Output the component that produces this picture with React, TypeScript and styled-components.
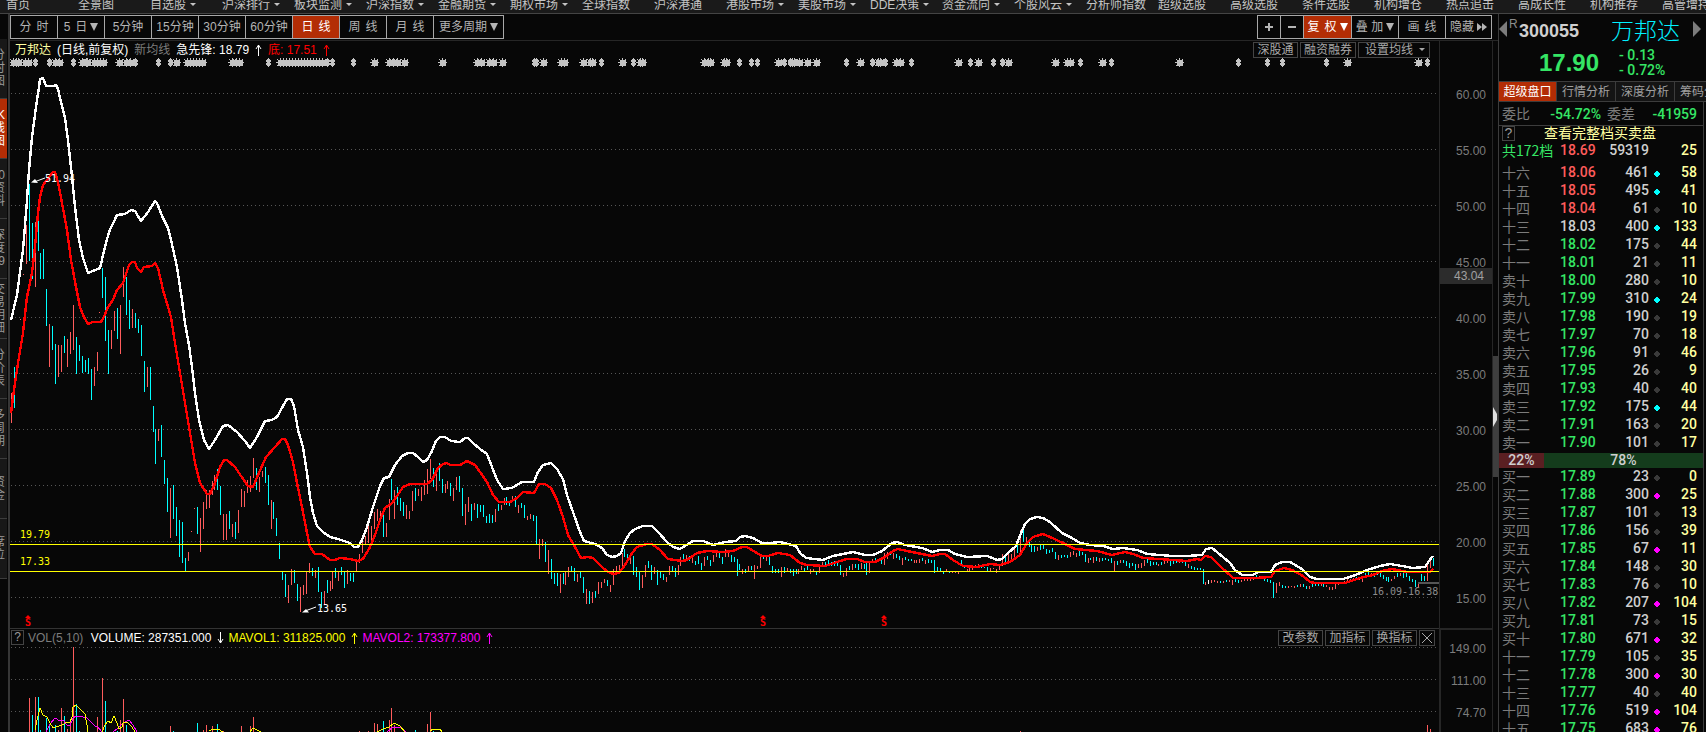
import React from "react";
import styled, { createGlobalStyle } from "styled-components";

const GlobalStyle = createGlobalStyle`
  * { box-sizing: border-box; }
  body {
    margin: 0;
    background: #070707;
    color: #b8b8b8;
    font: 12px/16px "Liberation Sans", "Noto Sans CJK SC", sans-serif;
  }
  button { font: inherit; color: inherit; background: none; border: 0; padding: 0; margin: 0; white-space: nowrap; }
  a { color: inherit; text-decoration: none; }
`;

const UP = "#ff5c5c";
const DOWN = "#00ffff";
const GREEN = "#35e565";
const ACCENT = "#b32d05";

/* ---------- frame ---------- */

const Page = styled.div`
  display: flex;
  flex-direction: column;
  height: 100vh;
  overflow: hidden;
`;

const Nav = styled.nav`
  display: flex;
  flex: none;
  height: 14px;
  padding-left: 6px;
  overflow: hidden;
  background: #1a1a1a;
  border-bottom: 1px solid #444;
`;

const NavLink = styled.a`
  display: flex;
  flex: 0 0 72px;
  align-items: center;
  gap: 4px;
  height: 9px;
  line-height: 8px;
  color: #c4c4c4;
  white-space: nowrap;
`;

const Body = styled.div`
  display: flex;
  flex: 1;
  min-height: 0;
`;

const Caret = styled.span<{ $size: number }>`
  display: inline-block;
  border: ${(p) => p.$size}px solid transparent;
  border-top: ${(p) => (p.$size > 3 ? p.$size * 2 : p.$size)}px solid currentColor;
  border-bottom: 0;
`;

/* ---------- left rail ---------- */

const Rail = styled.aside`
  flex: 0 0 10px;
  padding: 25px 1px 0 0;
  overflow: hidden;
  border-right: 2px solid #363636;
`;

const RailTab = styled.button<{ $active?: boolean }>`
  display: flex;
  flex-direction: column;
  align-items: flex-end;
  justify-content: center;
  width: 100%;
  height: 60px;
  padding-right: 2px;
  overflow: hidden;
  line-height: 13px;
  color: ${(p) => (p.$active ? "#fff" : "#9a9a9a")};
  background: ${(p) => (p.$active ? ACCENT : "#181818")};
  border-bottom: 1px solid #3c3c3c;
`;

/* ---------- centre ---------- */

const Main = styled.main`
  display: flex;
  flex: 1;
  flex-direction: column;
  min-width: 0;
`;

const Toolbar = styled.div`
  display: flex;
  flex: none;
  justify-content: space-between;
  height: 27px;
  padding: 1px 6px 0 0;
  border-bottom: 1px solid #262626;
`;

const ButtonGroup = styled.div`
  display: flex;
  height: 24px;
  border: 1px solid #a8a8a8;
`;

const ToolButton = styled.button<{ $width: number; $active?: boolean }>`
  display: flex;
  align-items: center;
  justify-content: center;
  gap: 3px;
  width: ${(p) => p.$width}px;
  color: ${(p) => (p.$active ? "#fff" : "#b4b4b4")};
  background: ${(p) => (p.$active ? ACCENT : "none")};
  & + & { border-left: 1px solid #a8a8a8; }
`;

const Spaced = styled.span`
  display: flex;
  gap: 5px;
`;

const Charts = styled.div`
  display: flex;
  flex: 1;
  min-height: 0;
`;

const Panes = styled.div`
  display: flex;
  flex: 1;
  flex-direction: column;
  min-width: 0;
`;

const Pane = styled.section<{ $height?: number }>`
  display: flex;
  flex: ${(p) => (p.$height ? `0 0 ${p.$height}px` : "1")};
  flex-direction: column;
  min-height: 0;
  & + & { border-top: 1px solid #333; }
`;

const PaneHeader = styled.header`
  display: flex;
  flex: none;
  align-items: center;
  justify-content: space-between;
  height: 17px;
  padding-right: 4px;
`;

const Legend = styled.div<{ $indent: number; $gap: number }>`
  display: flex;
  align-items: center;
  gap: ${(p) => p.$gap}px;
  padding-left: ${(p) => p.$indent}px;
  white-space: pre;
`;

const Tint = styled.span<{ $color: string }>`
  display: flex;
  align-items: center;
  gap: 6px;
  color: ${(p) => p.$color};
`;

const Tags = styled.div<{ $right: number }>`
  display: flex;
  gap: 2px;
  padding-right: ${(p) => p.$right}px;
`;

const Tag = styled.button`
  display: flex;
  align-items: center;
  justify-content: center;
  gap: 6px;
  min-width: 45px;
  height: 16px;
  padding: 0 3px;
  color: #a8a8a8;
  border: 1px solid #444;
`;

const WideTag = styled(Tag)`
  padding: 0 4px 0 6px;
`;

const CloseTag = styled(Tag)`
  min-width: 16px;
  padding: 0;
`;

const HelpButton = styled.button`
  width: 13px;
  height: 15px;
  line-height: 13px;
  color: #9a9a9a;
  border: 1px solid #444;
`;

const Plot = styled.svg`
  display: block;
  flex: 1;
  width: 100%;
  min-height: 0;
`;

const Axis = styled.div`
  display: flex;
  flex: 0 0 54px;
  flex-direction: column;
  color: #7c7c7c;
  text-align: right;
`;

const AxisScale = styled.div<{ $height?: number; $top: number; $step: number }>`
  position: relative;
  flex: ${(p) => (p.$height ? `0 0 ${p.$height}px` : "1")};
  min-height: 0;
  padding: ${(p) => p.$top}px 6px 0 0;
  overflow: hidden;
  line-height: ${(p) => p.$step}px;
  border: solid #262626;
  border-width: 0 1px;
  & + & { border-top: 2px solid #262626; border-left-width: 2px; }
`;

const CursorPrice = styled.output`
  position: absolute;
  top: 227px;
  right: 0;
  left: 0;
  padding-right: 8px;
  line-height: 16px;
  color: #a0a0a0;
  background: #2c2c2c;
`;

const Splitter = styled.div`
  flex: 0 0 5px;
  padding-top: 315px;
`;

const SplitterGrip = styled.div`
  display: flex;
  align-items: center;
  height: 121px;
  background: #3e3e3e;
`;

/* ---------- quote panel ---------- */

const Quote = styled.aside`
  flex: 0 0 208px;
  overflow: hidden;
  border-left: 1px solid #3c3c3c;
`;

const QuoteTitle = styled.div`
  display: flex;
  align-items: center;
  height: 33px;
  padding-right: 5px;
`;

const Market = styled.span`
  align-self: flex-start;
  width: 12px;
  padding: 2px 0 0 2px;
  color: #8c8c8c;
`;

const Code = styled.span`
  flex: 1;
  font-size: 18px;
  font-weight: bold;
  color: #cfcfcf;
`;

const StockName = styled.h1`
  margin: 0 13px 0 0;
  font-size: 23px;
  font-weight: 300;
  line-height: 32px;
  color: #00f0ff;
`;

const QuotePrice = styled.div`
  display: flex;
  align-items: center;
  gap: 20px;
  height: 34px;
  padding: 0 0 2px 40px;
  color: ${GREEN};
`;

const Last = styled.strong`
  font-size: 24px;
  line-height: 28px;
`;

const Change = styled.span`
  display: block;
  font: 500 14px/15px Roboto, sans-serif;
`;

const QuoteTabs = styled.div`
  display: flex;
  height: 21px;
  overflow: hidden;
  border: solid #3c3c3c;
  border-width: 1px 0;
`;

const QuoteTab = styled.button<{ $active?: boolean }>`
  flex: 0 0 ${(p) => (p.$active ? 58 : 59)}px;
  color: ${(p) => (p.$active ? "#fff" : "#a0a0a0")};
  background: ${(p) => (p.$active ? ACCENT : "#141414")};
  border-right: 1px solid #3c3c3c;
`;

const Book = styled.div`
  margin-right: 2px;
  font-size: 14px;
  border-right: 1px solid #3c3c3c;
`;

const Imbalance = styled.dl`
  display: grid;
  grid-template-columns: 28px 71px 34px 1fr;
  height: 24px;
  margin: 0;
  padding: 0 6px 0 3px;
  line-height: 24px;
  text-align: right;
  border-bottom: 1px solid #3c3c3c;
  dt { color: #7c7c7c; }
  dd { margin: 0; font: 500 14px/24px Roboto, sans-serif; color: ${GREEN}; }
`;

const FullBook = styled.div`
  display: flex;
  align-items: center;
  height: 15px;
  padding-left: 3px;
`;

const FullBookLink = styled.a`
  margin-left: 29px;
  line-height: 15px;
  color: #ffffa0;
`;

const Levels = styled.table<{ $gap?: number }>`
  width: 100%;
  margin-bottom: ${(p) => p.$gap || 0}px;
  table-layout: fixed;
  border-collapse: collapse;
  font: 500 14px/18px Roboto, sans-serif;
  text-align: right;
  th, td { height: 18px; padding: 0; line-height: 18px; }
`;

const LevelName = styled.th<{ $color: string }>`
  width: 61px;
  padding-left: 3px !important;
  font: 14px/18px "Noto Sans CJK SC", sans-serif;
  text-align: left;
  color: ${(p) => p.$color};
`;

const Price = styled.td<{ $color: string }>`
  width: 35px;
  color: ${(p) => p.$color};
`;

const Volume = styled.td`
  width: 54px;
  color: #cfcfcf;
`;

const Mark = styled.td`
  width: 11px;
`;

const Orders = styled.td`
  padding-right: 6px !important;
  color: #ffffa0;
`;

const Ratio = styled.div`
  display: flex;
  height: 15px;
  margin: 2px 0 -1px;
  font: 500 14px/15px Roboto, sans-serif;
  color: #cfcfcf;
  text-align: center;
`;

const Share = styled.div<{ $value: number; $color: string }>`
  flex: ${(p) => p.$value};
  background: ${(p) => p.$color};
`;

/* ---------- data ---------- */

const NAV = [
  "首页", "全景图", "自选股▾", "沪深排行▾", "板块监测▾", "沪深指数▾", "金融期货▾", "期权市场▾",
  "全球指数", "沪深港通", "港股市场▾", "美股市场▾", "DDE决策▾", "资金流向▾", "个股风云▾", "分析师指数",
  "超级选股", "高级选股", "条件选股", "机构增仓", "热点追击", "高成长性", "机构推荐", "高管增持",
];

const RAIL = [
  ["分", "时", "图"], ["K", "线", "图"], ["F10", "资", "料"], ["深", "度", "F9"], ["交", "易", "明", "细"],
  ["分", "价", "表"], ["多", "周", "期"], ["资", "金"], ["席", "位"],
];

const PRICE_TICKS = ["60.00", "55.00", "50.00", "45.00", "40.00", "35.00", "30.00", "25.00", "20.00", "15.00"];
const VOLUME_TICKS = ["149.00", "111.00", "74.70"];

type Level = [string, string, number, string, number];
/* name, price, volume, flag (c = fresh sell, m = fresh buy, - = none), orders */
const SELLS: Level[] = [
  ["十六", "18.06", 461, "c", 58], ["十五", "18.05", 495, "c", 41], ["十四", "18.04", 61, "-", 10],
  ["十三", "18.03", 400, "c", 133], ["十二", "18.02", 175, "-", 44], ["十一", "18.01", 21, "-", 11],
  ["卖十", "18.00", 280, "-", 10], ["卖九", "17.99", 310, "c", 24], ["卖八", "17.98", 190, "-", 19],
  ["卖七", "17.97", 70, "-", 18], ["卖六", "17.96", 91, "-", 46], ["卖五", "17.95", 26, "-", 9],
  ["卖四", "17.93", 40, "-", 40], ["卖三", "17.92", 175, "c", 44], ["卖二", "17.91", 163, "-", 20],
  ["卖一", "17.90", 101, "-", 17],
];
const BUYS: Level[] = [
  ["买一", "17.89", 23, "-", 0], ["买二", "17.88", 300, "m", 25], ["买三", "17.87", 101, "-", 13],
  ["买四", "17.86", 156, "-", 39], ["买五", "17.85", 67, "m", 11], ["买六", "17.84", 148, "-", 30],
  ["买七", "17.83", 76, "-", 10], ["买八", "17.82", 207, "m", 104], ["买九", "17.81", 73, "-", 15],
  ["买十", "17.80", 671, "m", 32], ["十一", "17.79", 105, "-", 35], ["十二", "17.78", 300, "m", 30],
  ["十三", "17.77", 40, "-", 40], ["十四", "17.76", 519, "m", 104], ["十五", "17.75", 683, "m", 76],
];
const MARKS: Record<string, string> = { c: "#00ffff", m: "#ff00ff", "-": "#3a3a3a" };
const PREVIOUS_CLOSE = 18.03;
const priceColor = (p: string) => (+p > PREVIOUS_CLOSE ? UP : +p < PREVIOUS_CLOSE ? GREEN : "#cfcfcf");

const WIDE_EVENTS = [
  13, 16, 18, 25, 28, 55, 59, 82, 86, 87, 94, 97, 100, 103, 119, 126, 130, 176, 187, 190, 193, 196, 199, 202,
  232, 236, 239, 280, 283, 286, 289, 292, 295, 298, 301, 304, 307, 310, 313, 316, 319, 322, 374, 389, 393, 397,
  404, 442, 477, 481, 489, 493, 502, 543, 561, 564, 583, 590, 592, 622, 640, 642, 704, 708, 710, 724, 726, 778,
  792, 794, 799, 807, 816, 860, 878, 880, 896, 900, 958, 978, 1008, 1055, 1067, 1070, 1102, 1179, 1347, 1418,
];
const NARROW_EVENTS = [
  35, 49, 73, 135, 158, 170, 268, 327, 332, 353, 534, 536, 601, 633, 739, 751, 757, 784, 790, 846, 872, 885,
  911, 970, 993, 1002, 1080, 1111, 1238, 1267, 1282, 1326, 1427,
];

const UPPER =
  "11,320 17,295 20,272 23,250 26,213 27,200 29,170 32,137 36,107 39,87 40,79 43,78 46,86 53,86 56,85 58,89 61,102 65,118 68,140 71,167 74,197 76,215 79,240 83,258 88,273 93,271 100,268 105,247 109,232 117,215 125,214 131,210 135,211 141,221 148,212 155,201 157,203 163,218 168,228 171,240 177,267 182,300 185,323 189,345 192,367 195,393 199,420 204,440 209,449 215,440 223,426 228,425 237,432 245,441 250,448 257,437 265,421 272,420 277,417 283,406 287,399 291,399 294,406 298,430 303,447 307,473 310,497 313,513 317,526 323,532 330,537 338,539 350,543 354,547 358,547 362,540 367,527 373,507 380,486 384,478 389,477 395,465 402,456 408,453 413,453 418,457 423,462 427,460 432,451 436,441 440,437 445,437 451,441 460,442 465,438 468,438 473,443 480,449 487,454 492,467 497,480 503,489 512,488 522,482 534,482 538,472 543,465 551,463 557,469 563,479 567,495 573,512 580,532 584,541 595,544 602,548 607,555 612,557 617,556 621,553 625,541 630,533 635,529 643,526 652,526 658,532 667,542 673,547 680,549 688,544 693,541 703,541 713,545 725,542 736,541 740,537 745,536 753,538 762,543 770,543 780,542 796,546 800,553 806,558 823,560 833,556 853,552 865,555 873,555 882,551 892,543 897,542 905,545 922,548 932,552 940,550 948,550 955,554 967,557 987,556 997,560 1002,559 1008,553 1016,546 1021,533 1025,524 1030,519 1037,517 1043,518 1050,522 1062,533 1072,538 1080,543 1090,545 1103,546 1113,549 1123,548 1137,550 1147,554 1160,555 1173,556 1187,556 1202,555 1206,549 1212,548 1217,552 1230,563 1235,570 1242,575 1253,575 1258,572 1271,572 1275,565 1282,562 1290,562 1302,569 1310,577 1317,579 1343,579 1353,576 1367,570 1380,566 1390,564 1402,566 1413,568 1425,567 1429,561 1433,556";
const LOWER =
  "11,413 13,397 18,363 23,333 27,297 32,273 35,247 38,213 40,197 43,185 47,180 53,172 55,172 58,182 62,203 67,230 71,260 76,287 80,307 84,317 88,324 93,322 101,322 104,317 108,307 113,300 117,290 123,283 129,265 132,262 135,262 137,268 141,272 144,267 152,266 155,263 158,268 163,290 171,317 175,343 180,373 185,403 190,433 195,463 200,483 207,494 210,494 215,483 220,467 224,460 227,460 235,467 241,476 248,486 253,487 258,475 266,457 275,447 282,439 285,439 288,445 293,462 297,483 302,507 307,533 310,547 315,554 322,554 330,560 335,560 340,558 350,559 358,561 363,559 370,547 375,535 380,520 385,508 392,503 397,496 403,487 410,484 427,484 432,480 438,468 443,464 447,463 450,465 460,465 467,461 475,465 480,472 487,482 493,495 499,502 510,502 517,498 523,492 534,493 539,484 545,484 551,488 557,500 563,517 568,535 575,547 581,558 588,557 593,558 602,567 608,572 613,574 619,573 625,565 632,553 637,547 647,544 652,544 660,550 668,559 682,561 687,560 697,553 707,551 723,552 733,551 742,547 747,547 755,552 762,556 768,556 778,553 790,555 800,563 807,565 825,566 837,562 847,559 857,559 865,562 875,562 885,557 893,551 898,549 907,551 932,556 940,554 945,554 953,560 963,566 977,567 990,564 1000,565 1010,562 1020,555 1027,543 1033,537 1043,534 1050,537 1063,543 1075,549 1097,551 1112,555 1125,552 1133,554 1143,558 1173,560 1187,561 1197,559 1201,560 1205,556 1211,557 1220,566 1233,578 1255,578 1271,577 1275,571 1284,568 1292,570 1303,576 1310,582 1315,583 1345,583 1360,578 1373,575 1382,571 1392,569 1407,572 1430,572 1433,569";

/* Each bar is "<r|c><x>:<high>-<low>": r rises, c falls. */
const BARS_EARLY =
  "r11:393-423 c14:367-408 r17:360-361 r20:319-320 r23:274-275 r26:225-264 c29:184-261 c32:223-279 r35:222-287 c38:205-251 c40:253-279 c43:249-279 c46:289-326 r49:324-367 c52:326-350 c55:344-384 r58:345-377 r61:345-372 c64:336-353 r67:339-367 r70:332-354 r73:305-350 c76:337-374 c79:345-361 c82:356-373 c85:360-372 c88:358-374 c91:369-400 r94:367-386 r97:352-371 r99:312-313 c102:268-298 c105:277-341 c108:330-374 r111:330-349 r114:311-331 c117:308-339 r120:305-354 r123:267-297 c126:277-315 c129:300-329 r132:309-328 c135:313-328 c138:319-333 c141:325-356 c144:361-392 r147:367-387 c150:367-400 c153:406-432 c155:429-464 r158:429-441 c161:425-457 c164:460-484 c167:478-512 r170:488-538 c173:485-519 c176:507-536 c179:520-557 c182:522-563 c185:558-571 r188:552-561 r191:531-532 r194:508-509 c197:507-534 r200:518-552 r203:502-529 r206:490-509 r209:490-508 r212:481-495 r214:475-490 c217:469-490 c220:486-515 r223:514-540 r226:514-540 c229:511-529 r232:524-537 c235:522-539 r238:510-533 r241:489-507 r244:491-507 r247:480-493 r250:476-492 r253:458-478 c256:468-490 r259:477-492 r262:471-477 c265:467-483 c268:475-505 r271:500-529 c273:502-519 c276:518-536 c279:543-559 c282:572-580 c285:574-597 r288:585-603 r291:569-585 c294:570-583 c297:584-601 r300:587-612 r303:585-595 r306:571-594 r309:563-573 c312:568-576 r315:570-578 c318:567-592 c321:592-608 r324:591-605 c327:580-593 r330:581-591 r332:571-589 c335:568-578 r338:571-581 c341:567-575 c344:571-588 r347:570-584 c350:573-581 c353:573-582 r356:562-571 r359:554-563 r362:541-553 r365:536-544 r368:525-543 r371:526-544 r374:512-529 r377:509-521 r380:511-522 c383:515-537 r386:523-537 r389:499-520 c391:479-500 r394:490-519 c397:487-505 c400:498-511 c403:502-516 r406:505-519 r409:511-519 r412:491-511 c415:488-501 r418:489-496 r421:487-501 r424:480-495 r427:469-494 r430:459-479 c433:468-487 r436:474-491 c439:463-481 c442:479-493 r445:484-493 r447:481-489 c450:483-496 r453:488-501 r456:477-490 c459:476-492 c462:488-516 r465:504-525 r468:497-512 c471:504-521 r474:503-510 c477:504-518 c480:505-512 c483:505-517 c486:516-523 c489:514-523 c492:515-523 r495:509-522 c498:504-511 r501:505-510 r504:498-505 c506:497-505 c509:502-506 r512:496-501 c515:496-507 r518:505-513 c521:503-508 c524:505-518 r527:516-520 r530:514-519 c533:515-521 c536:516-544 r539:539-559 r542:539-546 c545:542-562 r548:550-574 c551:559-579 c554:573-584 c557:573-586 r560:574-593 c563:573-584 r565:572-585 r568:567-577 c571:566-571 c574:568-581 r577:574-582 c580:572-578 c583:577-593 r586:589-604 c589:591-604 r592:592-603 c595:591-598 r598:582-594 r601:582-588 r604:579-583 c607:580-586 r610:585-592 r613:569-585 r616:566-574 r619:565-573 r622:553-567 c624:549-557 c627:554-563 r630:554-564 c633:556-575 c636:567-577 c639:572-590 r642:575-588 r645:565-577 c648:561-568 c651:565-580 r654:567-574 c657:570-585 c660:572-578 c663:574-580 r666:577-582 r669:566-575 c672:566-571 c675:568-577 r678:565-575 r680:557-566 c683:554-559";
/* Later sessions are stored on a grid three times as fine, from an origin of their own. */
const BARS_MIDDLE =
  "r259:345-363 c268:348-363 r277:348-369 c286:363-375 c295:348-372 c304:369-390 r313:351-378 c322:348-360 c331:360-378 r340:345-366 r349:330-351 c358:339-354 c367:351-372 r376:327-351 r385:339-351 c394:345-366 c403:351-366 c412:357-408 c418:372-390 r427:387-402 c436:387-399 r445:378-393 c454:378-390 r463:375-417 r472:378-387 r481:351-384 c490:345-357 r499:348-363 c508:351-375 c517:378-399 c526:387-399 c535:387-399 r544:381-411 c553:381-399 r562:384-396 c571:387-399 c580:387-408 c589:387-402 r595:387-402 r604:378-390 c613:384-396 c622:378-390 r631:387-402 r640:387-396 c649:393-405 r658:378-399 r667:366-378 c676:366-378 c685:360-372 c694:366-378 c703:363-378 c712:366-378 c721:375-405 r730:399-411 r739:384-408 c748:378-390 r757:372-390 c766:372-384 c775:372-390 r784:369-387 c793:372-387 c799:369-405 r808:366-399 r817:357-369 c826:354-363 c844:360-372 r853:339-375 r862:336-357 c871:336-345 r880:339-357 c889:342-354 c898:348-360 r907:354-375 c916:351-360 c925:357-363 c934:357-363 r943:360-369 r949:360-369 r958:357-369 c967:354-363 r976:360-372 c985:357-369 c994:360-369 c1003:360-399 c1012:381-393 c1021:384-396 c1030:396-402 r1039:387-396 c1048:393-399 r1057:396-400 r1066:396-400 r1075:396-402 c1084:360-372 c1093:375-384 r1102:387-396 r1108:384-396 r1117:375-390 r1126:375-384 r1135:372-384 c1144:378-384 c1153:381-384 c1162:381-393 r1171:384-393 r1180:384-387 r1189:387-399 r1198:375-390 r1207:342-378 c1216:345-366 r1225:339-366 r1234:342-363 r1243:327-351 c1252:310-339 r1261:270-336 c1270:260-306 r1279:291-315 c1288:306-321 c1294:315-336 c1303:318-336 r1312:321-333 c1321:315-330 c1330:312-327 c1339:327-342 c1348:330-339 c1357:324-336 c1366:336-357 r1375:345-360";
const BARS_LATE =
  "c184:225-234 c193:225-231 c202:225-234 r211:216-231 r220:213-225 r229:219-231 c238:213-228 c247:216-225 c256:222-246 r265:234-249 c272:234-240 r281:231-249 c290:231-243 r299:234-246 c308:233-243 c317:234-240 c326:237-243 c334:234-249 r343:243-273 c352:243-255 r361:240-249 c370:240-249 c379:243-258 c388:249-264 c397:249-258 c406:252-270 r415:252-264 r424:249-264 r433:240-258 c442:237-249 c451:243-258 c460:246-255 c469:246-255 r475:252-258 c484:246-255 r493:240-252 r502:243-249 c511:243-258 c520:240-252 c529:240-249 r538:243-249 c547:240-249 c556:246-258 r565:252-264 c574:258-267 c583:261-270 c592:264-270 c601:264-270 c610:267-312 r616:306-315 r634:300-309 r643:300-306 r652:303-309 c661:303-309 r670:303-309 c679:300-306 r688:300-306 r697:300-315 c706:297-306 c715:300-309 r724:300-306 r733:297-303 r742:297-303 r751:294-303 r760:291-300 c769:285-297 r778:288-297 c793:294-303 c802:297-306 c811:300-309 c820:306-354 r829:309-339 r838:306-318 c847:315-324 c856:318-324 r865:318-324 r874:318-321 r883:318-324 c892:315-321 r901:312-321 c910:312-321 c919:318-327 r928:318-327 c937:312-321 c946:312-318 c955:312-318 r964:312-318 c970:312-321 r979:315-321 r988:321-330 r997:321-330 r1006:312-327 r1015:306-315 r1024:306-312 r1033:303-309 r1042:297-306 r1051:297-306 r1060:293-303 c1069:291-300 r1078:291-300 r1087:290-306 c1096:279-294 c1105:276-285 r1114:279-288 c1123:279-291 c1132:276-285 c1141:280-291 c1150:285-297 c1159:291-303 c1165:291-306 r1174:297-303 r1183:288-297 c1192:279-291 r1201:278-288 c1210:279-294 c1219:276-291 c1228:288-303 c1237:297-306 c1246:300-321 r1255:309-321 c1264:282-303 c1273:288-303 r1282:255-303 r1291:240-264 c1300:234-258";
const BARS_VOLUME =
  "r88:264-366 c97:315-366 r106:261-366 c115:261-366 c121:360-366 c139:324-366 c148:345-366 c166:345-366 r175:360-366 r184:294-366 c193:318-366 r202:357-366 r211:335-366 r220:111-366 c229:282-366 c238:362-366 r292:321-366 r307:204-366 c316:273-366 c352:362-366 r361:330-366 r370:267-366 c379:345-366 r511:348-366 c520:362-366 c592:339-366 r610:360-366 r619:345-366 r637:348-366 c652:342-366 r670:362-366 r724:348-366 r751:348-366 r760:321-366 r1078:362-366 r1105:362-366 r1123:339-366 r1132:342-366 c1150:333-366 r1168:330-366 r1174:294-366 r1183:345-366 c1246:360-366 r1282:342-366 r1291:306-366 c1300:362-366 r3061:363-366 r4282:345-366 r4291:357-366";

const MAVOL1 = [
  "35,730 37,720 40,708 43,715 47,717 50,723 53,728 62,725 67,722 70,722 72,717 73,707 76,705 80,709 85,714 87,725 88,732",
  "102,732 105,725 108,721 111,723 114,716 117,723 119,729 122,727 123,723 127,722 132,727 135,732",
  "209,731 213,729 218,729 223,732", "250,732 253,728 261,732",
  "377,732 383,729 389,727 394,723 400,726 405,732", "430,731 433,729 440,729 442,732",
];
const MAVOL2 = [
  "46,732 50,724 55,718 60,721 63,720 67,725 70,726 73,718 76,716 83,717 87,718 92,723 95,726 97,726 102,732",
  "113,732 117,729 123,723 129,720 133,725 137,732", "387,732 393,727 400,727 406,732",
];

/* Builds one path for all the bars of a direction. */
function barPath(source: string, kind: string, x0 = 0, y0 = 0, unit = 1) {
  return source
    .split(" ")
    .filter((bar) => bar[0] === kind)
    .map((bar) => {
      const [x, high, low] = bar.slice(1).split(/[:-]/).map(Number);
      const px = x0 + Math.floor(x / unit) + 0.5;
      return `M${px} ${y0 + Math.round(high / unit)}V${y0 + Math.round(low / unit)}`;
    })
    .join("");
}

const priceBars = (kind: string) =>
  barPath(BARS_EARLY, kind) + barPath(BARS_MIDDLE, kind, 600, 440, 3) + barPath(BARS_LATE, kind, 1000, 480, 3);

/* ---------- drawings ---------- */

const Arrow = ({ down }: { down?: boolean }) => (
  <svg width="7" height="12" viewBox="0 0 7 12" fill="none" stroke="currentColor" aria-hidden="true">
    <path d={down ? "M3.5 0V11M1 7L3.5 11L6 7" : "M3.5 12V1M1 5L3.5 1L6 5"} />
  </svg>
);

const PageArrow = ({ left }: { left?: boolean }) => (
  <svg width="8" height="16" viewBox="0 0 8 16" fill="#7c7c7c" aria-hidden="true">
    <path d={left ? "M8 0V16L0 8Z" : "M0 0V16L8 8Z"} />
  </svg>
);

const GridLines = ({ rows }: { rows: number[] }) => (
  <g stroke="#565656" strokeDasharray="1 3" shapeRendering="crispEdges">
    {rows.map((y) => (
      <line key={y} x1="11" x2="1439" y1={y + 0.5} y2={y + 0.5} />
    ))}
  </g>
);

const Lines = ({ points, color, width = 1 }: { points: string[]; color: string; width?: number }) => (
  <g fill="none" stroke={color} strokeWidth={width} strokeLinejoin="round" shapeRendering="crispEdges">
    {points.map((p) => (
      <polyline key={p} points={p} />
    ))}
  </g>
);

const Events = () => (
  <g fill="#c4c4c4" stroke="#c4c4c4" shapeRendering="crispEdges">
    {WIDE_EVENTS.map((x) => (
      <path key={x} d={`M${x - 2} 60h5v5h-5zM${x - 4} 62.5h9M${x + 0.5} 58v9M${x - 3} 59l7 7M${x + 4} 59l-7 7`} strokeWidth="1" stroke="#c4c4c4" />
    ))}
    {NARROW_EVENTS.map((x) => (
      <path key={x} stroke="none" d={`M${x} 58h1v1h1v1h1v2h-1v1h1v2h-1v1h-1v1h-1v-1h-1v-1h-1v-2h1v-1h-1v-2h1v-1h1z`} />
    ))}
  </g>
);

const Dividend = ({ x }: { x: number }) => (
  <g fill="#ff0000">
    <path d={`M${x - 3} 618h6l-3 -3z`} />
    <text x={x} y="626" fontSize="10" fontWeight="bold" textAnchor="middle">S</text>
  </g>
);

const PricePlot = () => (
  <Plot role="img" aria-label="日线">
    <g transform="translate(-10 -58)" fontFamily="DejaVu Sans Mono, monospace" fontSize="10">
      <GridLines rows={[93, 149, 205, 261, 317, 373, 429, 485, 541, 597]} />
      <Events />
      <g shapeRendering="crispEdges">
        <path d={priceBars("r")} stroke={UP} />
        <path d={priceBars("c")} stroke={DOWN} />
        <path d="M1208.5 580V584" stroke="#fff" />
      </g>
      <Lines points={[UPPER]} color="#ffffff" width={2.4} />
      <Lines points={[LOWER]} color="#ff0000" width={2.4} />
      <path d="M10 544.5H1439M10 571.5H1439" stroke="#ffff00" shapeRendering="crispEdges" />
      <path d="M1418 583H1439" stroke="#555" strokeWidth="2" />
      <g fill="#ffff00">
        <text x="20" y="538">19.79</text>
        <text x="20" y="565">17.33</text>
      </g>
      <g fill="#ffffff" stroke="none">
        <path d="M31 182.500L35 179L38 183ZM302 612.500L306 609L309 612.500Z" />
        <path d="M34 182L45 178M305 611L316 607" stroke="#fff" />
        <text x="45" y="182">51.94</text>
        <text x="317" y="612">13.65</text>
      </g>
      <text x="1372" y="595" fill="#8c8c8c">16.09-16.38</text>
      <Dividend x={28} />
      <Dividend x={763} />
      <Dividend x={884} />
    </g>
  </Plot>
);

const VolumePlot = () => (
  <Plot role="img" aria-label="VOLUME">
    <g transform="translate(-10 -646)">
      <GridLines rows={[647, 679, 711]} />
      <g shapeRendering="crispEdges">
        <path d={barPath(BARS_VOLUME, "r", 0, 610, 3)} stroke={UP} />
        <path d={barPath(BARS_VOLUME, "c", 0, 610, 3)} stroke={DOWN} />
      </g>
      <Lines points={MAVOL2} color="#ff00ff" />
      <Lines points={MAVOL1} color="#ffff00" />
    </g>
  </Plot>
);

const LevelRows = ({ levels }: { levels: Level[] }) => (
  <tbody>
    {levels.map(([name, price, volume, flag, orders]) => (
      <tr key={price}>
        <LevelName scope="row" $color="#7c7c7c">{name}</LevelName>
        <Price $color={priceColor(price)}>{price}</Price>
        <Volume>{volume}</Volume>
        <Mark>
          <svg width="6" height="6" viewBox="0 0 6 6" fill={MARKS[flag]} shapeRendering="crispEdges" aria-hidden="true">
            <path d="M2 0h2v1h1v1h1v2h-1v1h-1v1h-2v-1h-1v-1h-1v-2h1v-1h1z" />
          </svg>
        </Mark>
        <Orders>{orders}</Orders>
      </tr>
    ))}
  </tbody>
);

const Pair = ({ text }: { text: string }) => (
  <Spaced>
    {text.split("").map((c) => (
      <span key={c}>{c}</span>
    ))}
  </Spaced>
);

export default function App() {
  return (
    <Page>
      <GlobalStyle />
      <Nav>
        {NAV.map((item) => (
          <NavLink key={item} href="#">
            {item.replace("▾", "")}
            {item.endsWith("▾") && <Caret $size={3} />}
          </NavLink>
        ))}
      </Nav>
      <Body>
        <Rail>
          {RAIL.map((lines, i) => (
            <RailTab key={lines.join("")} $active={i === 1}>
              {lines.map((line) => (
                <span key={line}>{line}</span>
              ))}
            </RailTab>
          ))}
        </Rail>
        <Main>
          <Toolbar>
            <ButtonGroup>
              <ToolButton $width={46}><Pair text="分时" /></ToolButton>
              <ToolButton $width={47}><Pair text="5日" /><Caret $size={4} /></ToolButton>
              <ToolButton $width={47}>5分钟</ToolButton>
              <ToolButton $width={47}>15分钟</ToolButton>
              <ToolButton $width={47}>30分钟</ToolButton>
              <ToolButton $width={47}>60分钟</ToolButton>
              <ToolButton $width={47} $active><Pair text="日线" /></ToolButton>
              <ToolButton $width={47}><Pair text="周线" /></ToolButton>
              <ToolButton $width={47}><Pair text="月线" /></ToolButton>
              <ToolButton $width={70}>更多周期<Caret $size={4} /></ToolButton>
            </ButtonGroup>
            <ButtonGroup>
              <ToolButton $width={22} aria-label="放大">
                <svg width="8" height="8" stroke="currentColor" strokeWidth="2"><path d="M0 4H8M4 0V8" /></svg>
              </ToolButton>
              <ToolButton $width={23} aria-label="缩小">
                <svg width="8" height="8" stroke="currentColor" strokeWidth="2"><path d="M0 4H8" /></svg>
              </ToolButton>
              <ToolButton $width={48} $active><Pair text="复权" /><Caret $size={4} /></ToolButton>
              <ToolButton $width={47}>叠 加<Caret $size={4} /></ToolButton>
              <ToolButton $width={47}><Pair text="画线" /></ToolButton>
              <ToolButton $width={46}>
                隐藏
                <svg width="10" height="8" fill="currentColor" aria-hidden="true"><path d="M0 0L5 4L0 8ZM5 0L10 4L5 8Z" /></svg>
              </ToolButton>
            </ButtonGroup>
          </Toolbar>
          <Charts>
            <Panes>
              <Pane $height={587}>
                <PaneHeader>
                  <Legend $indent={5} $gap={6}>
                    <Tint $color="#ffffa0">万邦达</Tint>
                    <Tint $color="#ffffff">(日线,前复权)</Tint>
                    <Tint $color="#7c7c7c">新均线</Tint>
                    <Tint $color="#ffffff">急先锋: 18.79<Arrow /></Tint>
                    <Tint $color="#ff0000">底: 17.51<Arrow /></Tint>
                  </Legend>
                  <Tags $right={5}>
                    <Tag>深股通</Tag>
                    <Tag>融资融券</Tag>
                    <WideTag>设置均线<Caret $size={3} /></WideTag>
                  </Tags>
                </PaneHeader>
                <PricePlot />
              </Pane>
              <Pane>
                <PaneHeader>
                  <Legend $indent={1} $gap={4}>
                    <HelpButton>?</HelpButton>
                    <Tint $color="#7c7c7c">VOL(5,10) </Tint>
                    <Tint $color="#ffffff">VOLUME: 287351.000<Arrow down /></Tint>
                    <Tint $color="#ffff00">MAVOL1: 311825.000<Arrow /></Tint>
                    <Tint $color="#ff00ff">MAVOL2: 173377.800<Arrow /></Tint>
                  </Legend>
                  <Tags $right={0}>
                    <Tag>改参数</Tag>
                    <Tag>加指标</Tag>
                    <Tag>换指标</Tag>
                    <CloseTag aria-label="关闭">
                      <svg width="10" height="10" stroke="currentColor"><path d="M0 0L10 10M10 0L0 10" /></svg>
                    </CloseTag>
                  </Tags>
                </PaneHeader>
                <VolumePlot />
              </Pane>
            </Panes>
            <Axis>
              <AxisScale $height={587} $top={26} $step={56}>
                {PRICE_TICKS.map((t) => <div key={t}>{t}</div>)}
                <CursorPrice>43.04</CursorPrice>
              </AxisScale>
              <AxisScale $top={3} $step={32}>
                {VOLUME_TICKS.map((t) => <div key={t}>{t}</div>)}
              </AxisScale>
            </Axis>
            <Splitter>
              <SplitterGrip>
                <svg width="5" height="20" fill="#e0e0e0" aria-hidden="true"><path d="M0 0L4 7V13L0 20Z" /></svg>
              </SplitterGrip>
            </Splitter>
          </Charts>
        </Main>
        <Quote>
          <QuoteTitle>
            <button aria-label="上一只"><PageArrow left /></button>
            <Market>R</Market>
            <Code>300055</Code>
            <StockName>万邦达</StockName>
            <button aria-label="下一只"><PageArrow /></button>
          </QuoteTitle>
          <QuotePrice>
            <Last>17.90</Last>
            <div>
              <Change>- 0.13</Change>
              <Change>- 0.72%</Change>
            </div>
          </QuotePrice>
          <QuoteTabs>
            <QuoteTab $active>超级盘口</QuoteTab>
            <QuoteTab>行情分析</QuoteTab>
            <QuoteTab>深度分析</QuoteTab>
            <QuoteTab>筹码分布</QuoteTab>
          </QuoteTabs>
          <Book>
            <Imbalance>
              <dt>委比</dt>
              <dd>-54.72%</dd>
              <dt>委差</dt>
              <dd>-41959</dd>
            </Imbalance>
            <FullBook>
              <HelpButton>?</HelpButton>
              <FullBookLink href="#">查看完整档买卖盘</FullBookLink>
            </FullBook>
            <Levels $gap={4}>
              <tbody>
                <tr>
                  <LevelName scope="row" $color={GREEN}>共172档</LevelName>
                  <Price $color={UP}>18.69</Price>
                  <Volume>59319</Volume>
                  <Mark />
                  <Orders>25</Orders>
                </tr>
              </tbody>
            </Levels>
            <Levels><LevelRows levels={SELLS} /></Levels>
            <Ratio>
              <Share $value={22} $color="#5a1f22">22%</Share>
              <Share $value={78} $color="#143c1c">78%</Share>
            </Ratio>
            <Levels><LevelRows levels={BUYS} /></Levels>
          </Book>
        </Quote>
      </Body>
    </Page>
  );
}
